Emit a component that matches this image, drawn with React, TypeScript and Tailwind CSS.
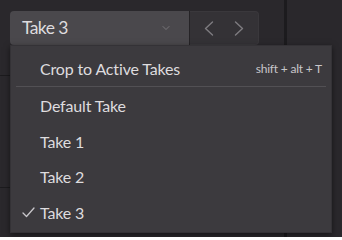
import React from 'react';
import { ChevronDown } from 'lucide-react';

const takes = ['Default Take', 'Take 1', 'Take 2', 'Take 3'];

function Arrow({ dir }: { dir: 'left' | 'right' }) {
  return (
    <svg width="10" height="15" viewBox="0 0 10 15" fill="none" stroke="currentColor" strokeWidth="1.4" strokeLinecap="round" strokeLinejoin="round">
      {dir === 'left' ? <polyline points="8.5,1 1.5,7.5 8.5,14" /> : <polyline points="1.5,1 8.5,7.5 1.5,14" />}
    </svg>
  );
}

export default function App() {
  const active = 'Take 3';

  return (
    <div className="relative w-[342px] h-[237px] bg-[#2a282c] flex overflow-hidden text-[#dedcdf]" style={{ fontFamily: 'Lato, sans-serif' }}>
      <div className="w-[284px] flex flex-col">
        <div className="h-[76px] border-b border-[#1c1b1e] pt-[11px] pl-[10px]">
          <div className="flex h-[34px]">
            <button className="w-[180px] h-full bg-[#4a484c] rounded-l-[4px] flex items-center justify-between pl-[12px] pr-[17px] border-r border-[#252326]">
              <span className="text-[17.5px] leading-none tracking-[-0.6px]">Take 3</span>
              <ChevronDown size={12} strokeWidth={1.5} className="text-[#858387]" />
            </button>
            <div className="w-[69px] h-full bg-[#343236] rounded-r-[4px] border border-l-0 border-[#3a383c] flex items-center justify-center gap-[20px] text-[#7e7c80]">
              <Arrow dir="left" />
              <Arrow dir="right" />
            </div>
          </div>
        </div>
        <div className="h-[112px] border-b border-[#1c1b1e]" />
      </div>
      <div className="w-[3px] bg-[#1c1b1e]" />
      <div className="flex-1" />

      {/* dropdown menu */}
      <div className="absolute left-[10px] top-[45px] w-[322px] h-[188px] bg-[#3c3a3e] border border-[#343236] shadow-[0_2px_6px_rgba(0,0,0,0.5)] flex flex-col pt-[6px]">
        <div className="h-[34px] flex items-center justify-between pl-[29px] pr-[9px]">
          <span className="text-[16px] tracking-[-0.15px]">Crop to Active Takes</span>
          <span className="text-[12px] tracking-[-0.2px] text-[#c8c6ca]">shift + alt + T</span>
        </div>
        <div className="mx-[5px] mb-[1.5px] h-px bg-[#525054]" />
        {takes.map(t => (
          <div key={t} className="h-[35.5px] flex items-center relative pl-[29px]">
            {t === active && (
              <svg width="13" height="11" viewBox="0 0 13 11" fill="none" stroke="#c8c6ca" strokeWidth="1.3" strokeLinecap="round" strokeLinejoin="round" className="absolute left-[11px]">
                <polyline points="1,6 4.5,9.5 12,1" />
              </svg>
            )}
            <span className="text-[16px] tracking-[-0.15px]">{t}</span>
          </div>
        ))}
      </div>
    </div>
  );
}
